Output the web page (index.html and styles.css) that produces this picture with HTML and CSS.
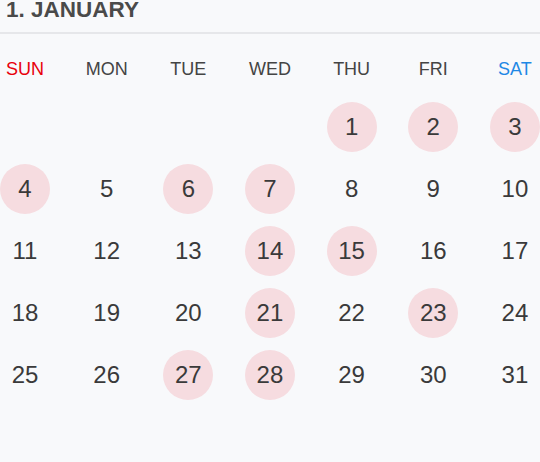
FILE: index.html
```html
<!DOCTYPE html>
<html>
<head>
<meta charset="utf-8">
<link rel="stylesheet" href="styles.css">
</head>
<body>
<div class="cal">
  <div class="title">1. JANUARY</div>
  <div class="weekdays">
    <div class="wd sun">SUN</div>
    <div class="wd">MON</div>
    <div class="wd">TUE</div>
    <div class="wd">WED</div>
    <div class="wd">THU</div>
    <div class="wd">FRI</div>
    <div class="wd sat">SAT</div>
  </div>
  <div class="days">
    <div class="day"></div>
    <div class="day"></div>
    <div class="day"></div>
    <div class="day"></div>
    <div class="day mark">1</div>
    <div class="day mark">2</div>
    <div class="day mark">3</div>
    <div class="day mark">4</div>
    <div class="day">5</div>
    <div class="day mark">6</div>
    <div class="day mark">7</div>
    <div class="day">8</div>
    <div class="day">9</div>
    <div class="day">10</div>
    <div class="day">11</div>
    <div class="day">12</div>
    <div class="day">13</div>
    <div class="day mark">14</div>
    <div class="day mark">15</div>
    <div class="day">16</div>
    <div class="day">17</div>
    <div class="day">18</div>
    <div class="day">19</div>
    <div class="day">20</div>
    <div class="day mark">21</div>
    <div class="day">22</div>
    <div class="day mark">23</div>
    <div class="day">24</div>
    <div class="day">25</div>
    <div class="day">26</div>
    <div class="day mark">27</div>
    <div class="day mark">28</div>
    <div class="day">29</div>
    <div class="day">30</div>
    <div class="day">31</div>
  </div>
</div>
</body>
</html>
```
FILE: styles.css
```css
html, body {
  margin: 0;
  padding: 0;
  background: #f8f9fb;
}
body {
  font-family: "Liberation Sans", Arial, sans-serif;
  width: 540px;
  height: 462px;
  overflow: hidden;
}
.title {
  height: 32px;
  border-bottom: 2px solid #e6e7ea;
  padding-left: 6px;
  font-size: 22.5px;
  line-height: 19px;
  font-weight: bold;
  color: #4a4a4a;
}
.weekdays {
  margin-top: 23px;
  display: grid;
  grid-template-columns: repeat(7, 50px);
  justify-content: space-between;
}
.wd {
  text-align: center;
  font-size: 18px;
  line-height: 24px;
  color: #444;
  white-space: nowrap;
}
.wd.sun { color: #e8000b; }
.wd.sat { color: #1e88e5; }
.days {
  margin-top: 21px;
  display: grid;
  grid-template-columns: repeat(7, 50px);
  grid-auto-rows: 50px;
  justify-content: space-between;
  row-gap: 12px;
}
.day {
  display: flex;
  align-items: center;
  justify-content: center;
  font-size: 24px;
  color: #3a3a3a;
  border-radius: 50%;
}
.day.mark {
  background: #f6dce0;
}
```
